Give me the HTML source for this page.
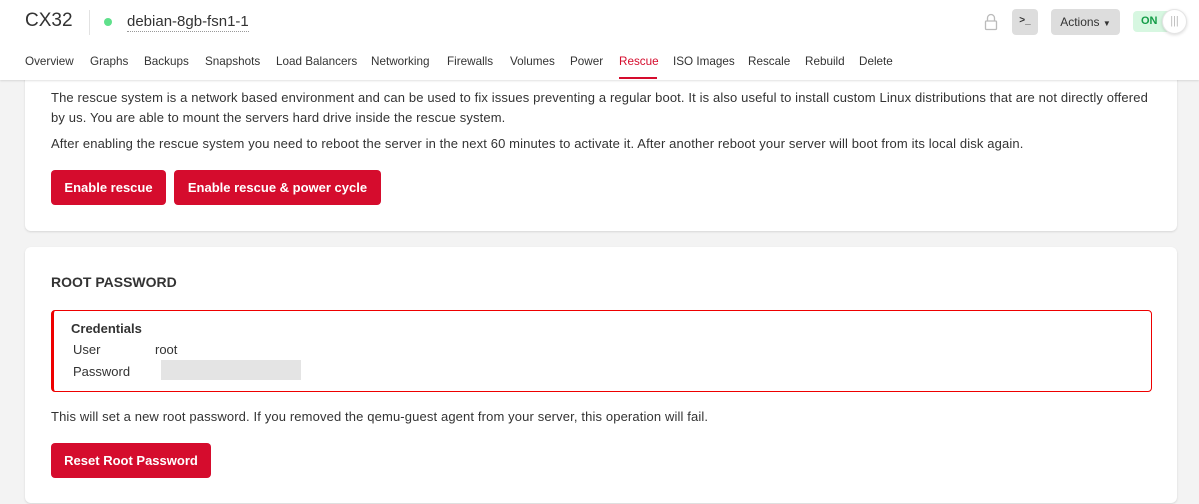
<!DOCTYPE html>
<html><head><meta charset="utf-8"><style>
*{box-sizing:border-box;margin:0;padding:0}
body{width:1199px;height:504px;overflow:hidden;background:#f3f3f3;font-family:"Liberation Sans",sans-serif;color:#333;position:relative}
.hdr{position:absolute;left:0;top:0;width:1199px;height:80px;background:#fff;box-shadow:0 1px 2px rgba(0,0,0,.12);z-index:2}
.abs{position:absolute}
.nav span{position:absolute;top:55px;font-size:11.7px;color:#333;white-space:nowrap}
.card{position:absolute;left:25px;width:1152px;background:#fff;border-radius:6px;box-shadow:0 1px 2px rgba(0,0,0,.12)}
p{font-size:13px;color:#333;line-height:20px;letter-spacing:0.13px}
.btn{position:absolute;height:35px;background:#d50c2d;color:#fff;font-weight:bold;font-size:13px;border-radius:4px;line-height:35px;text-align:center}
</style></head><body>
<div class="hdr">
 <div class="abs" style="left:25px;top:10px;font-size:19px;color:#333">CX32</div>
 <div class="abs" style="left:89px;top:10px;width:1px;height:25px;background:#e2e2e2"></div>
 <div class="abs" style="left:104px;top:18px;width:8px;height:8px;border-radius:50%;background:#5fe08b"></div>
 <div class="abs" style="left:127px;top:12px;font-size:15px;color:#333;border-bottom:1px dotted #999;line-height:19px">debian-8gb-fsn1-1</div>
 <svg class="abs" style="left:984px;top:13px" width="14" height="18" viewBox="0 0 14 18"><path d="M3.5 8V5a3.5 3.5 0 0 1 7 0V8" fill="none" stroke="#bbb" stroke-width="1.3"/><rect x="1.5" y="8" width="11" height="8.5" rx="1" fill="none" stroke="#bbb" stroke-width="1.3"/></svg>
 <div class="abs" style="left:1012px;top:9px;width:26px;height:26px;border-radius:4px;background:#ddd;font-size:10px;font-weight:bold;text-align:center;line-height:24px;color:#333">&gt;_</div>
 <div class="abs" style="left:1051px;top:9px;width:69px;height:26px;border-radius:4px;background:#ddd;font-size:12px;text-align:center;line-height:26px;color:#333">Actions <span style="font-size:8px">&#9660;</span></div>
 <div class="abs" style="left:1133px;top:11px;width:40px;height:21px;border-radius:4px;background:#d7f7e1;color:#139c47;font-size:11px;font-weight:bold;line-height:21px;padding-left:8px">ON</div>
 <div class="abs" style="left:1162px;top:9px;width:25px;height:25px;border-radius:50%;background:#fff;border:1px solid #e5e5e5;box-shadow:0 1px 3px rgba(0,0,0,.15);text-align:center;font-size:11px;line-height:22px;color:#bbb">|||</div>
 <div class="nav">
  <span style="left:25px">Overview</span><span style="left:90px">Graphs</span><span style="left:144px">Backups</span><span style="left:205px">Snapshots</span><span style="left:276px">Load Balancers</span><span style="left:371px">Networking</span><span style="left:447px">Firewalls</span><span style="left:510px">Volumes</span><span style="left:570px">Power</span><span style="left:619px;color:#d50c2d">Rescue</span><span style="left:673px">ISO Images</span><span style="left:748px">Rescale</span><span style="left:805px">Rebuild</span><span style="left:859px">Delete</span>
 </div>
 <div class="abs" style="left:619px;top:77px;width:38px;height:2px;background:#d50c2d"></div>
</div>
<div class="card" style="top:60px;height:171px">
 <p class="abs" style="left:26px;top:28px;width:1110px">The rescue system is a network based environment and can be used to fix issues preventing a regular boot. It is also useful to install custom Linux distributions that are not directly offered by us. You are able to mount the servers hard drive inside the rescue system.</p>
 <p class="abs" style="left:26px;top:74px;width:1110px">After enabling the rescue system you need to reboot the server in the next 60 minutes to activate it. After another reboot your server will boot from its local disk again.</p>
 <div class="btn" style="left:26px;top:110px;width:115px">Enable rescue</div>
 <div class="btn" style="left:149px;top:110px;width:207px">Enable rescue &amp; power cycle</div>
</div>
<div class="card" style="top:247px;height:256px">
 <div class="abs" style="left:26px;top:27px;font-size:14px;font-weight:bold;color:#333">ROOT PASSWORD</div>
 <div class="abs" style="left:26px;top:63px;width:1101px;height:82px;border:1px solid #e00;border-left:3px solid #e00;border-radius:4px">
  <div class="abs" style="left:17px;top:10px;font-size:13px;font-weight:bold;color:#333">Credentials</div>
  <div class="abs" style="left:19px;top:31px;font-size:13px">User</div>
  <div class="abs" style="left:101px;top:31px;font-size:13px">root</div>
  <div class="abs" style="left:19px;top:53px;font-size:13px">Password</div>
  <div class="abs" style="left:107px;top:49px;width:140px;height:20px;background:#e4e4e4"></div>
 </div>
 <p class="abs" style="left:26px;top:160px">This will set a new root password. If you removed the qemu-guest agent from your server, this operation will fail.</p>
 <div class="btn" style="left:26px;top:196px;width:160px">Reset Root Password</div>
</div>
</body></html>
